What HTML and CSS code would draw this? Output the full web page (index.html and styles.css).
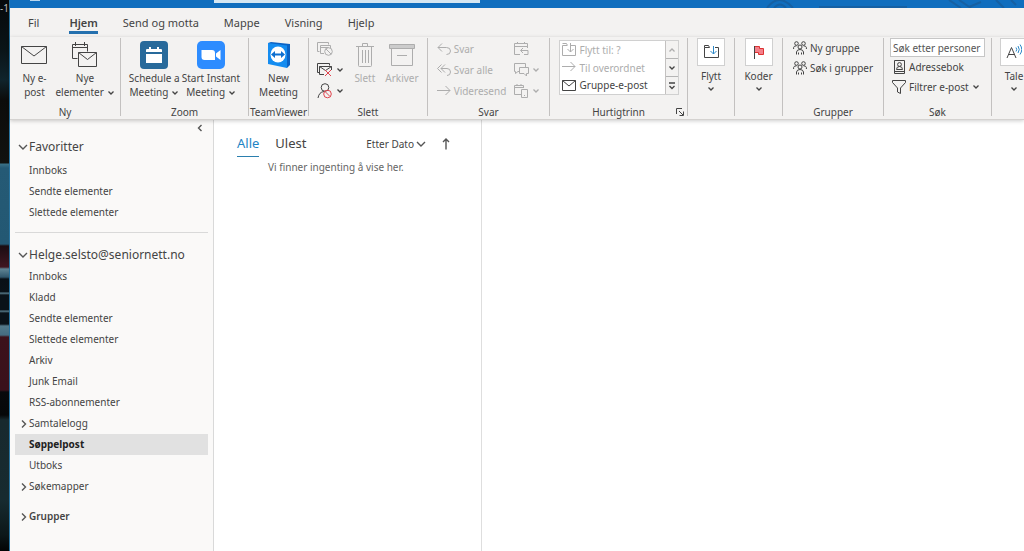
FILE: index.html
```html
<!DOCTYPE html>
<html lang="no">
<head>
<meta charset="utf-8">
<title>Søppelpost - Outlook</title>
<link rel="stylesheet" href="styles.css">
</head>
<body>
<svg class="defs" aria-hidden="true">
  <symbol id="chev-down" viewBox="0 0 8 6"><path d="M1.5 1.5 4 4l2.500-2.500"/></symbol>
  <symbol id="chev-right" viewBox="0 0 6 8"><path d="M1 .5 4.500 4 1 7.500"/></symbol>
  <symbol id="chev-big" viewBox="0 0 10 8"><path d="M1 2l4 4 4-4"/></symbol>
  <symbol id="envelope" viewBox="0 0 26 18"><path d="M.5.500h25v17H.500zM.500.500 13 10 25.500.500"/></symbol>
  <symbol id="people" viewBox="0 0 14 14"><circle cx="3.500" cy="2.500" r="1.800"/><circle cx="10.500" cy="2.500" r="1.800"/><circle cx="7" cy="6" r="2"/><path d="M.6 8V6.500Q1 4.800 3.500 4.800M13.400 8V6.500Q13 4.800 10.500 4.800M3.500 13.500V11Q4 8.500 7 8.500t3.500 2.500v2.500M5.500 13.500v-2M8.500 13.500v-2"/></symbol>
</svg>
<div class="screen">
  <div class="desktop"><span>-1</span></div>
  <div class="window">
    <header class="titlebar">
      <div class="title-dot"></div>
      <div class="title-search"></div>
      <svg class="title-art" viewBox="0 0 260 8"><path d="M3 8Q15-8 29 8M10 8q6-7 12 0M55 7h88M185 0l12 8M195 0l12 8M205 7l12-5M232 0l8 8M247 0l5 5"/></svg>
    </header>
    <nav class="tabs">
      <button class="tab tab-file">Fil</button>
      <button class="tab active">Hjem</button>
      <button class="tab">Send og motta</button>
      <button class="tab">Mappe</button>
      <button class="tab">Visning</button>
      <button class="tab">Hjelp</button>
    </nav>
    <div class="ribbon">
      <section class="group g-new">
        <div class="group-body">
          <button class="big"><span class="pic"><svg class="ico" width="26" height="18"><use href="#envelope"/></svg></span>Ny e-<br>post</button>
          <button class="big"><span class="pic"><svg class="ico" width="26" height="26" viewBox="0 0 26 26"><path d="M5.500 16.500h-5v-14h15v7M.500 5.500h15M3.500 0v4M12.500 0v4M6.500 10.500h18v14h-18zM6.500 10.500l9 7 9-7"/></svg></span>Nye<br>elementer <svg class="chev"><use href="#chev-down"/></svg></button>
        </div>
        <h2>Ny</h2>
      </section>
      <section class="group g-zoom">
        <div class="group-body">
          <button class="big"><span class="pic"><svg width="28" height="28" viewBox="0 0 28 28"><rect width="28" height="28" rx="4" fill="#286a9b"/><path fill="#fff" d="M6 9q0-1 1-1h2V6h2v2h6V6h2v2h2q1 0 1 1v2H6zM6 13h16v9H6z"/></svg></span>Schedule a<br>Meeting <svg class="chev"><use href="#chev-down"/></svg></button>
          <button class="big"><span class="pic"><svg width="28" height="28" viewBox="0 0 28 28"><rect width="28" height="28" rx="5" fill="#2d8cff"/><path fill="#fff" d="M4.500 9H15q3 0 3 3v7H7.500q-3 0-3-3zM19 12.500 23.500 9v10L19 15.500z"/></svg></span>Start Instant<br>Meeting <svg class="chev"><use href="#chev-down"/></svg></button>
        </div>
        <h2>Zoom</h2>
      </section>
      <section class="group g-tv">
        <div class="group-body">
          <button class="big"><span class="pic"><svg width="24" height="28" viewBox="0 0 24 28"><path fill="#0b62c4" d="M1 2 4 1l19 2v21l-3 3z"/><path fill="#148cf0" d="M1 2l19 2.500V27L1 23z"/><ellipse cx="11" cy="13.500" rx="7.500" ry="8" fill="#fff"/><path fill="#0d6fd0" d="M4 13.500 8 10v2.500h6V10l4 3.500-4 3.500v-2.500H8V17z"/></svg></span>New<br>Meeting</button>
        </div>
        <h2>TeamViewer</h2>
      </section>
      <section class="group g-delete">
        <div class="group-body">
          <div class="stack">
            <button class="small off" aria-label="Ignorer"><svg class="ico" width="16" height="14" viewBox="0 0 16 14"><path d="M2.500 9.500h-2v-9h11v2M7 11.500H3.500v-8h10V6M3.500 5.500h8"/><circle cx="11.500" cy="9.500" r="3.800"/><path d="M9 7l5 5"/></svg></button>
            <button class="small" aria-label="Rydd opp"><svg class="ico" width="16" height="14" viewBox="0 0 16 14"><path d="M2.500 9.500h-2v-9h12v2M7 11.500H2.500v-8h12V7M2.500 3.500l6 4 6-4"/><path class="red" d="M8 7l6 6M14 7l-6 6"/></svg><svg class="chev"><use href="#chev-down"/></svg></button>
            <button class="small" aria-label="Søppelpost"><svg class="ico" width="16" height="16" viewBox="0 0 16 16"><circle cx="8" cy="4.500" r="3.800"/><path d="M1 15q1-6 6-6.500"/><g class="red"><circle cx="10.500" cy="11" r="3.800"/><path d="M8 8.500l5 5"/></g></svg><svg class="chev"><use href="#chev-down"/></svg></button>
          </div>
          <button class="big off"><span class="pic"><svg class="ico" width="18" height="26" viewBox="0 0 18 26"><path d="M0 4.500h18M6.500 4V1.500h5V4M2.500 5v18.500q0 1 1 1h11q1 0 1-1V5M6.500 8v13M9.500 8v13M12.500 8v13"/></svg></span>Slett</button>
          <button class="big off"><span class="pic"><svg class="ico" width="26" height="24" viewBox="0 0 26 24"><path fill="#ccc" d="M.5 1.500h25v4H.500z"/><path d="M2.500 6v16.500h21V6M8 12.500h10"/></svg></span>Arkiver</button>
        </div>
        <h2>Slett</h2>
      </section>
      <section class="group g-reply">
        <div class="group-body">
          <div class="stack">
            <button class="small off"><svg class="ico" width="14" height="12" viewBox="0 0 14 12"><path d="M5 .5l-4 4 4 4M1 4.500h8.500q4 0 4 3.500t-4 3.500"/></svg>Svar</button>
            <button class="small off"><svg class="ico" width="14" height="12" viewBox="0 0 14 12"><path d="M4.500.500l-4 4 4 4M8 .500l-4 4 4 4M4 4.500h6q3.500 0 3.500 3.500T10 11.500"/></svg>Svar alle</button>
            <button class="small off"><svg class="ico" width="14" height="12" viewBox="0 0 14 12"><path d="M0 5.500h13M8.500 1 13 5.500 8.500 10"/></svg>Videresend</button>
          </div>
          <div class="stack">
            <button class="small off" aria-label="Møte"><svg class="ico" width="15" height="14" viewBox="0 0 15 14"><path d="M6 12.500H.500v-11h13V6M.500 4.500h13M3.500 0v2M10.500 0v2M9 6 6.500 8.500 9 11M7 8.500h7v4h-4"/></svg></button>
            <button class="small off" aria-label="Direktemelding"><svg class="ico" width="15" height="14" viewBox="0 0 15 14"><path d="M5 8.500H4l-2.500 2v-2h-1v-8h11v4M5.500 4.500h9v6h-2v2.500l-2.500-2.500H5.500z"/></svg><svg class="chev"><use href="#chev-down"/></svg></button>
            <button class="small off" aria-label="Mer"><svg class="ico" width="15" height="14" viewBox="0 0 15 14"><path d="M7 10.500H.500v-9h9V4M.500 3.500h9M3 0v2M7 0v2M7.500 5.500h6v8h-6zM10 11.500h1"/></svg><svg class="chev"><use href="#chev-down"/></svg></button>
          </div>
        </div>
        <h2>Svar</h2>
      </section>
      <section class="group g-quick">
        <div class="group-body">
          <div class="gallery">
            <div class="gallery-items">
              <button class="step off"><svg class="ico" width="14" height="13" viewBox="0 0 14 13"><path d="M5 2.500H.500v10h13v-10H9M.500.500h4l1 2M8.500 0v9M5.500 6l3 3 3-3"/></svg>Flytt til: ?</button>
              <button class="step off"><svg class="ico" width="14" height="13" viewBox="0 0 14 13"><path d="M0 5.500h13M8.500 1 13 5.500 8.500 10"/></svg>Til overordnet</button>
              <button class="step"><svg class="ico" width="14" height="11" viewBox="0 0 14 11"><path d="M.5.500h13v10H.500zM.500.500 7 6l6.500-5.500"/></svg>Gruppe-e-post</button>
            </div>
            <div class="gallery-nav">
              <button class="off" aria-label="Opp"><svg class="chev up"><use href="#chev-down"/></svg></button>
              <button aria-label="Ned"><svg class="chev"><use href="#chev-down"/></svg></button>
              <button aria-label="Flere"><svg class="chev more" viewBox="0 0 8 8"><path d="M1 1h6M1.500 4 4 6.500 6.500 4"/></svg></button>
            </div>
          </div>
        </div>
        <h2>Hurtigtrinn</h2>
        <button class="launcher" aria-label="Behandle hurtigtrinn"><svg class="ico" width="8" height="8" viewBox="0 0 8 8"><path d="M.5 6V.500H6M3 3l4 4M7.500 3.500v4h-4"/></svg></button>
      </section>
      <section class="group g-move">
        <button class="tile"><span class="tile-box"><svg class="ico" width="15" height="14" viewBox="0 0 15 14"><path d="M5.500 2.500H.500v10h14v-10H11M.500 2.500v-2h4l1 2"/><path class="blue" d="M9.500 1v8M6.500 6l3 3 3-3"/></svg></span>Flytt<svg class="chev"><use href="#chev-down"/></svg></button>
      </section>
      <section class="group g-tags">
        <button class="tile"><span class="tile-box"><svg class="ico" width="12" height="15" viewBox="0 0 12 15"><path class="flag" d="M1.500 1.500h5v2h4v6h-5v-2h-4z"/><path d="M1.500 1v13"/></svg></span>Koder<svg class="chev"><use href="#chev-down"/></svg></button>
      </section>
      <section class="group g-groups">
        <div class="group-body">
          <div class="stack">
            <button class="small"><svg class="ico" width="14" height="14"><use href="#people"/></svg>Ny gruppe</button>
            <button class="small"><svg class="ico" width="14" height="14"><use href="#people"/></svg>Søk i grupper</button>
          </div>
        </div>
        <h2>Grupper</h2>
      </section>
      <section class="group g-find">
        <div class="group-body">
          <div class="stack">
            <input class="people-search" type="text" placeholder="Søk etter personer" aria-label="Søk etter personer">
            <button class="small"><svg class="ico" width="14" height="14" viewBox="0 0 14 14"><path d="M2.500.500h10v13h-10zM2.500 11.500h10M4.500 9.500q0-3 3-3t3 3z"/><circle cx="7.500" cy="4.500" r="1.900"/></svg>Adressebok</button>
            <button class="small"><svg class="ico" width="14" height="14" viewBox="0 0 14 14"><path d="M.5.500h13v2L8.500 8v5.500L5.500 12V8L.500 2.500z"/></svg>Filtrer e-post<svg class="chev"><use href="#chev-down"/></svg></button>
          </div>
        </div>
        <h2>Søk</h2>
      </section>
      <section class="group g-speech">
        <button class="tile"><span class="tile-box"><svg class="ico" width="16" height="16" viewBox="0 0 16 16"><path d="M1 14 5.500 3.500 10 14M2.500 10.500h6"/><path class="blue" d="M10 3.500q1.500 2 0 4M12 2q2.500 3.500 0 7M14 .500q3.500 5 0 10"/></svg></span>Tale<svg class="chev"><use href="#chev-down"/></svg></button>
      </section>
    </div>
    <main class="content">
      <aside class="folders">
        <button class="collapse" aria-label="Skjul mapperuten"><svg class="arrow" width="6" height="8" viewBox="0 0 6 8"><path d="M4.500 1 1.500 4l3 3"/></svg></button>
        <h3 class="fav"><svg class="arrow" width="10" height="8"><use href="#chev-big"/></svg>Favoritter</h3>
        <a href="#">Innboks</a>
        <a href="#">Sendte elementer</a>
        <a href="#">Slettede elementer</a>
        <hr>
        <h3><svg class="arrow" width="10" height="8"><use href="#chev-big"/></svg>Helge.selsto@seniornett.no</h3>
        <a href="#">Innboks</a>
        <a href="#">Kladd</a>
        <a href="#">Sendte elementer</a>
        <a href="#">Slettede elementer</a>
        <a href="#">Arkiv</a>
        <a href="#">Junk Email</a>
        <a href="#">RSS-abonnementer</a>
        <a href="#" class="parent"><svg class="arrow" width="6" height="8"><use href="#chev-right"/></svg>Samtalelogg</a>
        <a href="#" class="selected">Søppelpost</a>
        <a href="#">Utboks</a>
        <a href="#" class="parent"><svg class="arrow" width="6" height="8"><use href="#chev-right"/></svg>Søkemapper</a>
        <a href="#" class="parent groups"><svg class="arrow" width="6" height="8"><use href="#chev-right"/></svg>Grupper</a>
      </aside>
      <section class="messages">
        <div class="list-head">
          <button class="filter on">Alle</button>
          <button class="filter">Ulest</button>
          <button class="sort">Etter Dato<svg class="arrow" width="10" height="8"><use href="#chev-big"/></svg></button>
          <button class="direction" aria-label="Stigende"><svg class="arrow" width="8" height="12" viewBox="0 0 8 12"><path d="M4 11.500V1M1 4l3-3 3 3"/></svg></button>
        </div>
        <p>Vi finner ingenting å vise her.</p>
      </section>
      <section class="reading"></section>
    </main>
  </div>
</div>
</body>
</html>
```
FILE: styles.css
```css
* { box-sizing: border-box; }
body { margin: 0; font: 10px/14px "Noto Sans", "Open Sans", sans-serif; color: #444; }
button { font: inherit; color: inherit; background: none; border: 0; padding: 0; margin: 0; }
a { color: inherit; text-decoration: none; }
h2, h3, p { margin: 0; font-weight: 400; }
svg { display: block; fill: none; flex: none; }
.defs { position: absolute; width: 0; height: 0; }
.ico { stroke: #444; stroke-width: 1; }
.chev { display: inline-block; width: 8px; height: 6px; stroke: #444; stroke-width: 1.3; }
.arrow { stroke: #555; stroke-width: 1.4; }
.red { stroke: #e0444e; }
.blue { stroke: #2b88c8; }
.flag { stroke: #d33; fill: #f4808a; }
.off { color: #adadad; }
.off .ico, .off .chev { stroke: #adadad; }

.screen { display: flex; height: 100vh; overflow: hidden; }
.desktop {
  flex: none; width: 9px; overflow: hidden; color: #bbb; font-size: 10px; line-height: 17px;
  background: linear-gradient(#06090b 0, #0a1418 50px, #10242c 80px, #0c0c0b 100px, #11120f 163px, #3a7186 164px, #255a75 168px, #235873 244px, #1b0d12 246px, #401620 267px, #5f8494 269px, #31566b 277px, #091017 279px, #0a1219 292px, #5b8090 293px, #0a1219 295px, #0a1219 310px, #5b8090 311px, #0a1219 313px, #0a1219 324px, #53798b 326px, #456c80 335px, #3c121b 337px, #3a111b 390px, #08090c 392px, #060708 415px, #18292e 420px, #172b30 500px, #0c1719 535px, #030404 551px);
}
.window { flex: 1; min-width: 0; display: flex; flex-direction: column; border-left: 1px solid #28749f; background: #fff; }
.titlebar { flex: none; height: 8px; display: flex; background: #106ebe; overflow: hidden; }
.title-dot { width: 10px; height: 1px; margin-left: 20px; background: #b8d6ee; }
.title-search { width: 266px; height: 3px; margin-left: 174px; background: #d5e7f2; }
.title-art { width: 260px; height: 8px; margin-left: auto; stroke: #1560a3; stroke-width: 2; }

.tabs { flex: none; height: 29px; display: flex; align-items: flex-start; gap: 25px; padding: 6px 0 0 18px; background: #f3f2f1; }
.tab { height: 20px; border-bottom: 3px solid transparent; font-size: 11px; line-height: 16px; white-space: nowrap; }
.tab-file { margin-right: 5px; }
.tab.active { font-weight: 600; border-bottom-color: #2470ae; }

.ribbon { flex: none; display: flex; height: 83px; padding: 1px 0 3px; background: #f3f2f1; border-bottom: 1px solid #d4d2d0; box-shadow: 0 1px 4px #0003; overflow: hidden; position: relative; }
.group { flex: none; display: flex; flex-direction: column; border-right: 1px solid #c3c1c0; white-space: nowrap; position: relative; }
.group h2 { font-size: 10px; line-height: 8px; text-align: center; }
.group-body { flex: 1; display: flex; justify-content: center; gap: 8px; }
.big { display: flow-root; text-align: center; align-self: flex-start; }
.pic { display: flex; height: 33px; align-items: center; justify-content: center; }
.stack { display: flex; flex-direction: column; align-items: flex-start; }
.small { display: flex; align-items: center; gap: 3px; height: 21px; }
.g-new { width: 111px; }
.g-new .group-body { padding-left: 6px; }
.g-zoom { width: 128px; }
.g-zoom .group-body { gap: 2px; }
.g-tv { width: 60px; }
.g-delete { width: 119px; }
.g-delete .group-body { gap: 10px; }
.g-reply { width: 122px; }
.g-quick { width: 138px; }
.g-move { width: 47px; }
.g-tags { width: 48px; }
.g-groups { width: 101px; }
.g-groups .small, .g-find .small { height: 20px; }
.g-find { width: 108px; }
.g-find .small { padding-left: 2px; }
.g-speech { width: 44px; border-right: 0; }
.gallery { display: flex; align-self: flex-start; width: 120px; height: 55px; margin-top: 2px; background: #fff; border: 1px solid #d0d0d0; }
.gallery-items { flex: 1; display: flex; flex-direction: column; }
.step { flex: 1; display: flex; align-items: center; gap: 4px; padding-left: 2px; }
.gallery-nav { width: 13px; display: flex; flex-direction: column; background: #f3f2f1; border-left: 1px solid #c3c1c0; }
.gallery-nav button { flex: 1; display: grid; place-items: center; }
.gallery-nav button + button { border-top: 1px solid #b5b5b5; }
.up { transform: rotate(180deg); }
.more { height: 8px; }
.launcher { position: absolute; right: 3px; bottom: 0; }
.tile { display: flex; flex-direction: column; align-items: center; line-height: 20px; }
.tile-box { display: grid; place-items: center; width: 28px; height: 28px; background: #fff; border: 1px solid #d0d0d0; }
.people-search { width: 95px; height: 19px; padding: 0 2px; border: 1px solid #c6c6c6; background: #fff; font: inherit; }
.people-search::placeholder { color: #555; opacity: 1; }

.content { flex: 1; display: flex; min-height: 0; }
.folders { flex: none; width: 204px; padding: 0 5px; background: #faf9f8; border-right: 1px solid #d9d9d9; display: flex; flex-direction: column; }
.collapse { align-self: flex-end; height: 16px; margin-right: 5px; }
.folders h3 { display: flex; align-items: center; gap: 1px; height: 22px; padding-left: 3px; font-size: 12px; }
.folders .fav { margin-bottom: 2px; }
.folders a { height: 21px; line-height: 21px; padding-left: 14px; }
.folders .parent { display: flex; align-items: center; gap: 2px; padding-left: 6px; }
.folders .selected { background: #e1e1e1; font-weight: 700; color: #222; }
.folders .groups { margin-top: 9px; font-weight: 600; }
.folders hr { width: 100%; height: 1px; margin: 9px 0 11px; border: 0; background: #d9d9d9; }
.messages { flex: none; width: 268px; border-right: 1px solid #dedede; }
.list-head { display: flex; align-items: center; gap: 16px; padding: 10px 31px 0 23px; }
.filter { height: 27px; border-bottom: 1px solid transparent; font-size: 13px; }
.filter.on { color: #1d84c4; border-bottom-color: #2b7fae; }
.sort { display: flex; align-items: center; gap: 2px; margin-left: auto; }
.messages p { padding: 3px 0 0 54px; color: #666; }
.reading { flex: 1; }
```
